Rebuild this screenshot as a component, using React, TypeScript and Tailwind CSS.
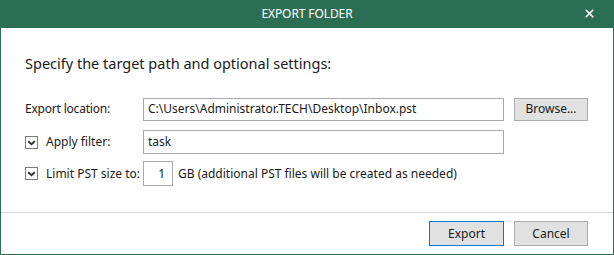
import { X } from "lucide-react";

function Box({ checked }: { checked: boolean }) {
  return (
    <span className="flex h-[13px] w-[13px] items-center justify-center border border-[#7a7a7a] bg-white">
      {checked && (
        <svg width="11" height="11" viewBox="0 0 11 11">
          <polyline points="2.2,4.2 5.5,7.2 8.8,4.2" fill="none" stroke="#333" strokeWidth="1.9" />
        </svg>
      )}
    </span>
  );
}

export default function App() {
  return (
    <div
      className="flex h-[255px] w-[614px] flex-col bg-[#2c6e54] text-[#1a1a1a]"
      style={{ fontFamily: '"Segoe UI", "Noto Sans", sans-serif' }}
    >
      <div className="relative flex h-[28px] items-center justify-center text-[12px] tracking-[-0.1px] text-white">
        EXPORT FOLDER
        <X size={13} strokeWidth={3.2} className="absolute right-[18px] top-[7px]" />
      </div>
      <div className="mx-px mb-px flex flex-1 flex-col bg-white text-[12px]">
        <div className="flex-1 px-[24px] pt-[26px]">
          <h1 className="text-[14.5px] leading-[19px]">Specify the target path and optional settings:</h1>
          <div className="mt-[24px] flex h-[24px] items-center">
            <span className="w-[118px] tracking-[-0.2px]">Export location:</span>
            <div className="flex h-[23px] w-[361px] items-center border border-[#a9a9a9] px-[4px]">
              C:\Users\Administrator.TECH\Desktop\Inbox.pst
            </div>
            <button className="ml-[10px] h-[23px] w-[74px] border border-[#adadad] bg-[#e1e1e1]">Browse...</button>
          </div>
          <div className="mt-[9px] flex h-[24px] items-center">
            <label className="flex w-[118px] items-center gap-[8px]">
              <Box checked />
              Apply filter:
            </label>
            <div className="flex h-[24px] w-[361px] items-center border border-[#a9a9a9] px-[4px]">task</div>
          </div>
          <div className="mt-[7px] flex h-[25px] items-center">
            <label className="flex w-[118px] items-center gap-[8px]">
              <Box checked />
              Limit PST size to:
            </label>
            <div className="flex h-[25px] w-[30px] items-center justify-end border border-[#a9a9a9] px-[7px]">1</div>
            <span className="ml-[5px]">GB (additional PST files will be created as needed)</span>
          </div>
        </div>
        <div className="flex h-[42px] items-center justify-end gap-[10px] border-t border-[#d9d9d9] pr-[25px]">
          <button className="h-[25px] w-[75px] border border-[#0078d7] bg-[#e1e1e1]">Export</button>
          <button className="h-[25px] w-[74px] border border-[#adadad] bg-[#e1e1e1]">Cancel</button>
        </div>
      </div>
    </div>
  );
}
